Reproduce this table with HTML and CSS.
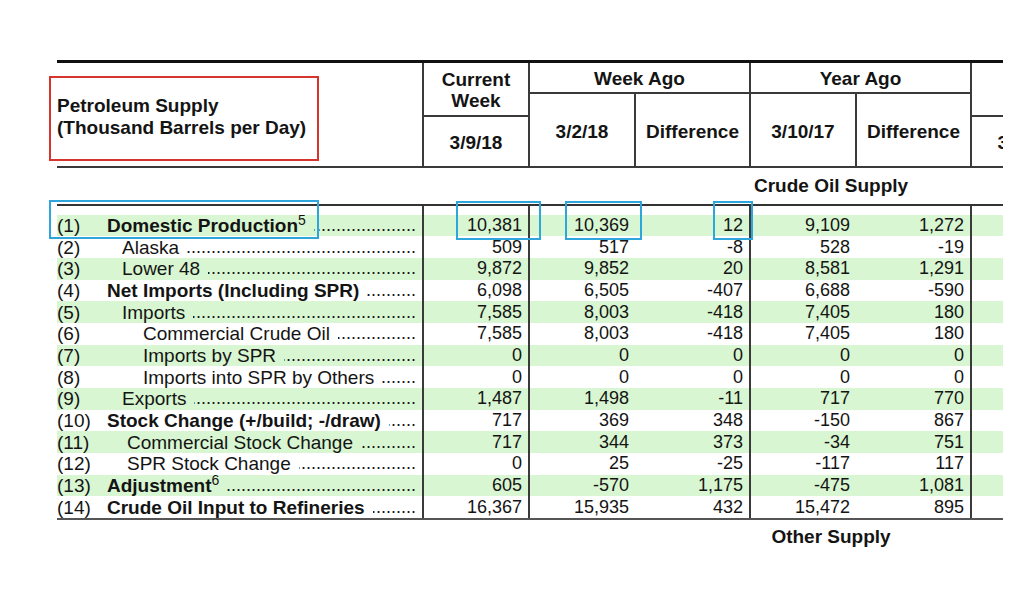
FILE: index.html
```html
<!DOCTYPE html>
<html lang="en">
<head>
  <meta charset="UTF-8" />
  <title>Petroleum Supply</title>
  <link rel="stylesheet" href="styles.css">
</head>
<body>
  <div class="sheet">
    <table class="supply">
      <colgroup>
        <col class="w-label"><col class="w-num"><col class="w-num"><col class="w-diff"><col class="w-num"><col class="w-diff"><col class="w-num"><col class="w-avg"><col class="w-avg">
      </colgroup>
      <thead>
        <tr class="h1">
          <th rowspan="3" class="title-cell">
            <div class="title">Petroleum Supply<br>(Thousand Barrels per Day)</div>
            <span class="mark red"></span>
          </th>
          <th rowspan="2" class="hd">Current<br>Week</th>
          <th colspan="2" class="hd">Week Ago</th>
          <th colspan="2" class="hd">Year Ago</th>
          <th rowspan="2" colspan="3" class="hd">Four-Week Averages</th>
        </tr>
        <tr class="h2">
          <th rowspan="2" class="hd">3/2/18</th>
          <th rowspan="2" class="hd">Difference</th>
          <th rowspan="2" class="hd">3/10/17</th>
          <th rowspan="2" class="hd">Difference</th>
        </tr>
        <tr class="h3">
          <th class="hd">3/9/18</th>
          <th class="hd">3/9/18</th>
          <th class="hd">3/10/17</th>
          <th class="hd">Percent Change</th>
        </tr>
      </thead>
      <tbody>
        <tr class="section first">
          <td></td>
          <td colspan="8">Crude Oil Supply</td>
        </tr>
        <tr class="spacer">
          <td></td><td class="sep"></td><td class="sep"></td><td></td><td class="sep"></td><td></td><td class="sep"></td><td></td><td></td>
        </tr>
        <tr class="row g">
          <td class="label"><span class="mark box-a"></span><div class="line"><span class="no">(1)</span><span class="name"><b>Domestic Production</b><sup>5</sup></span><span class="dots">..............................................................</span></div></td>
          <td class="n sep"><span class="mark box-b"></span>10,381</td>
          <td class="n sep"><span class="mark box-c"></span>10,369</td>
          <td class="n"><span class="mark box-d"></span>12</td>
          <td class="n sep">9,109</td>
          <td class="n">1,272</td>
          <td class="n sep"></td><td class="n"></td><td class="n"></td>
        </tr>
        <tr class="row">
          <td class="label"><div class="line"><span class="no">(2)</span><span class="name lv1">Alaska</span><span class="dots">..............................................................</span></div></td>
          <td class="n sep">509</td><td class="n sep">517</td><td class="n">-8</td><td class="n sep">528</td><td class="n">-19</td>
          <td class="n sep"></td><td class="n"></td><td class="n"></td>
        </tr>
        <tr class="row g">
          <td class="label"><div class="line"><span class="no">(3)</span><span class="name lv1">Lower 48</span><span class="dots">..............................................................</span></div></td>
          <td class="n sep">9,872</td><td class="n sep">9,852</td><td class="n">20</td><td class="n sep">8,581</td><td class="n">1,291</td>
          <td class="n sep"></td><td class="n"></td><td class="n"></td>
        </tr>
        <tr class="row">
          <td class="label"><div class="line"><span class="no">(4)</span><span class="name"><b>Net Imports (Including SPR)</b></span><span class="dots">..............................................................</span></div></td>
          <td class="n sep">6,098</td><td class="n sep">6,505</td><td class="n">-407</td><td class="n sep">6,688</td><td class="n">-590</td>
          <td class="n sep"></td><td class="n"></td><td class="n"></td>
        </tr>
        <tr class="row g">
          <td class="label"><div class="line"><span class="no">(5)</span><span class="name lv1">Imports</span><span class="dots">..............................................................</span></div></td>
          <td class="n sep">7,585</td><td class="n sep">8,003</td><td class="n">-418</td><td class="n sep">7,405</td><td class="n">180</td>
          <td class="n sep"></td><td class="n"></td><td class="n"></td>
        </tr>
        <tr class="row">
          <td class="label"><div class="line"><span class="no">(6)</span><span class="name lv2">Commercial Crude Oil</span><span class="dots">..............................................................</span></div></td>
          <td class="n sep">7,585</td><td class="n sep">8,003</td><td class="n">-418</td><td class="n sep">7,405</td><td class="n">180</td>
          <td class="n sep"></td><td class="n"></td><td class="n"></td>
        </tr>
        <tr class="row g">
          <td class="label"><div class="line"><span class="no">(7)</span><span class="name lv2">Imports by SPR</span><span class="dots">..............................................................</span></div></td>
          <td class="n sep">0</td><td class="n sep">0</td><td class="n">0</td><td class="n sep">0</td><td class="n">0</td>
          <td class="n sep"></td><td class="n"></td><td class="n"></td>
        </tr>
        <tr class="row">
          <td class="label"><div class="line"><span class="no">(8)</span><span class="name lv2">Imports into SPR by Others</span><span class="dots">..............................................................</span></div></td>
          <td class="n sep">0</td><td class="n sep">0</td><td class="n">0</td><td class="n sep">0</td><td class="n">0</td>
          <td class="n sep"></td><td class="n"></td><td class="n"></td>
        </tr>
        <tr class="row g">
          <td class="label"><div class="line"><span class="no">(9)</span><span class="name lv1">Exports</span><span class="dots">..............................................................</span></div></td>
          <td class="n sep">1,487</td><td class="n sep">1,498</td><td class="n">-11</td><td class="n sep">717</td><td class="n">770</td>
          <td class="n sep"></td><td class="n"></td><td class="n"></td>
        </tr>
        <tr class="row">
          <td class="label"><div class="line"><span class="no">(10)</span><span class="name"><b>Stock Change (+/build; -/draw)</b></span><span class="dots">..............................................................</span></div></td>
          <td class="n sep">717</td><td class="n sep">369</td><td class="n">348</td><td class="n sep">-150</td><td class="n">867</td>
          <td class="n sep"></td><td class="n"></td><td class="n"></td>
        </tr>
        <tr class="row g">
          <td class="label"><div class="line"><span class="no">(11)</span><span class="name lv1b">Commercial Stock Change</span><span class="dots">..............................................................</span></div></td>
          <td class="n sep">717</td><td class="n sep">344</td><td class="n">373</td><td class="n sep">-34</td><td class="n">751</td>
          <td class="n sep"></td><td class="n"></td><td class="n"></td>
        </tr>
        <tr class="row">
          <td class="label"><div class="line"><span class="no">(12)</span><span class="name lv1b">SPR Stock Change</span><span class="dots">..............................................................</span></div></td>
          <td class="n sep">0</td><td class="n sep">25</td><td class="n">-25</td><td class="n sep">-117</td><td class="n">117</td>
          <td class="n sep"></td><td class="n"></td><td class="n"></td>
        </tr>
        <tr class="row g">
          <td class="label"><div class="line"><span class="no">(13)</span><span class="name"><b>Adjustment</b><sup>6</sup></span><span class="dots">..............................................................</span></div></td>
          <td class="n sep">605</td><td class="n sep">-570</td><td class="n">1,175</td><td class="n sep">-475</td><td class="n">1,081</td>
          <td class="n sep"></td><td class="n"></td><td class="n"></td>
        </tr>
        <tr class="row last">
          <td class="label"><div class="line"><span class="no">(14)</span><span class="name"><b>Crude Oil Input to Refineries</b></span><span class="dots">..............................................................</span></div></td>
          <td class="n sep">16,367</td><td class="n sep">15,935</td><td class="n">432</td><td class="n sep">15,472</td><td class="n">895</td>
          <td class="n sep"></td><td class="n"></td><td class="n"></td>
        </tr>
        <tr class="section other">
          <td></td>
          <td colspan="8">Other Supply</td>
        </tr>
      </tbody>
    </table>
  </div>
</body>
</html>
```

FILE: styles.css
```css
body {
  margin: 0;
  background: #fff;
  color: #141414;
  font-family: "Liberation Sans", Arial, sans-serif;
}
.sheet {
  width: 963px;
  margin: 60px 0 0 40px;
  padding-left: 17px;
  box-sizing: border-box;
  overflow: hidden;
}
.supply {
  border-collapse: collapse;
  table-layout: fixed;
  width: 1084px;
  font-size: 18px;
}
.w-label { width: 366px; }
.w-num { width: 106px; }
.w-diff { width: 115px; }
.w-avg { width: 81px; }
th, td {
  padding: 0;
}

/* header */
.hd {
  font-size: 19px;
  font-weight: bold;
  text-align: center;
  vertical-align: middle;
  line-height: 21px;
  padding-top: 3px;
  border: 2px solid #3a3a3a;
  white-space: nowrap;
}
.h1 th { border-top: 3px solid #111; }
.h1 { height: 31px; }
.h2 { height: 23px; }
.h3 { height: 51px; }
.title-cell {
  position: relative;
  text-align: left;
  vertical-align: middle;
  border-bottom: 2px solid #3a3a3a;
}
.title {
  font-size: 19px;
  font-weight: bold;
  line-height: 22px;
  padding-top: 5px;
}

/* section titles */
.section td {
  height: 34px;
  font-size: 19px;
  text-align: center;
  font-weight: bold;
  vertical-align: middle;
}
.section.first td { height: 36px; }
.spacer td {
  height: 9px;
  border-top: 2px solid #333;
}
.sep { border-left: 2px solid #3a3a3a; }

/* data rows */
.row td {
  height: 21.7px;
  line-height: 21px;
  vertical-align: middle;
}
.row.g { background: #d8f6d1; }
.row.last td { border-bottom: 2px solid #555; }
.row td, .title-cell { position: relative; }
.n {
  text-align: right;
  padding-right: 6px;
  white-space: nowrap;
}
.label {
  font-size: 19px;
  padding-right: 6px;
}
.line {
  display: flex;
  white-space: nowrap;
}
.no { width: 50px; flex: none; }
.name { flex: none; }
.lv1 { padding-left: 15px; }
.lv1b { padding-left: 20px; }
.lv2 { padding-left: 36px; }
.name sup {
  font-size: 14px;
  line-height: 0;
  vertical-align: 7px;
}
.dots {
  flex: 1;
  overflow: hidden;
  direction: rtl;
  margin-left: 8px;
  font-size: 18px;
}

/* annotation boxes */
.mark {
  position: absolute;
  box-sizing: border-box;
  border: 2px solid #2ea6dc;
}
.mark.red {
  border-color: #d6352d;
  left: -8px;
  top: 13px;
  width: 270px;
  height: 85px;
}
.box-a { left: -8px; top: -15px; width: 270px; height: 39px; }
.box-b { left: 32px; top: -14px; width: 85px; height: 39px; }
.box-c { left: 35px; top: -14px; width: 77px; height: 39px; }
.box-d { left: 78px; top: -14px; width: 40px; height: 39px; }
```
